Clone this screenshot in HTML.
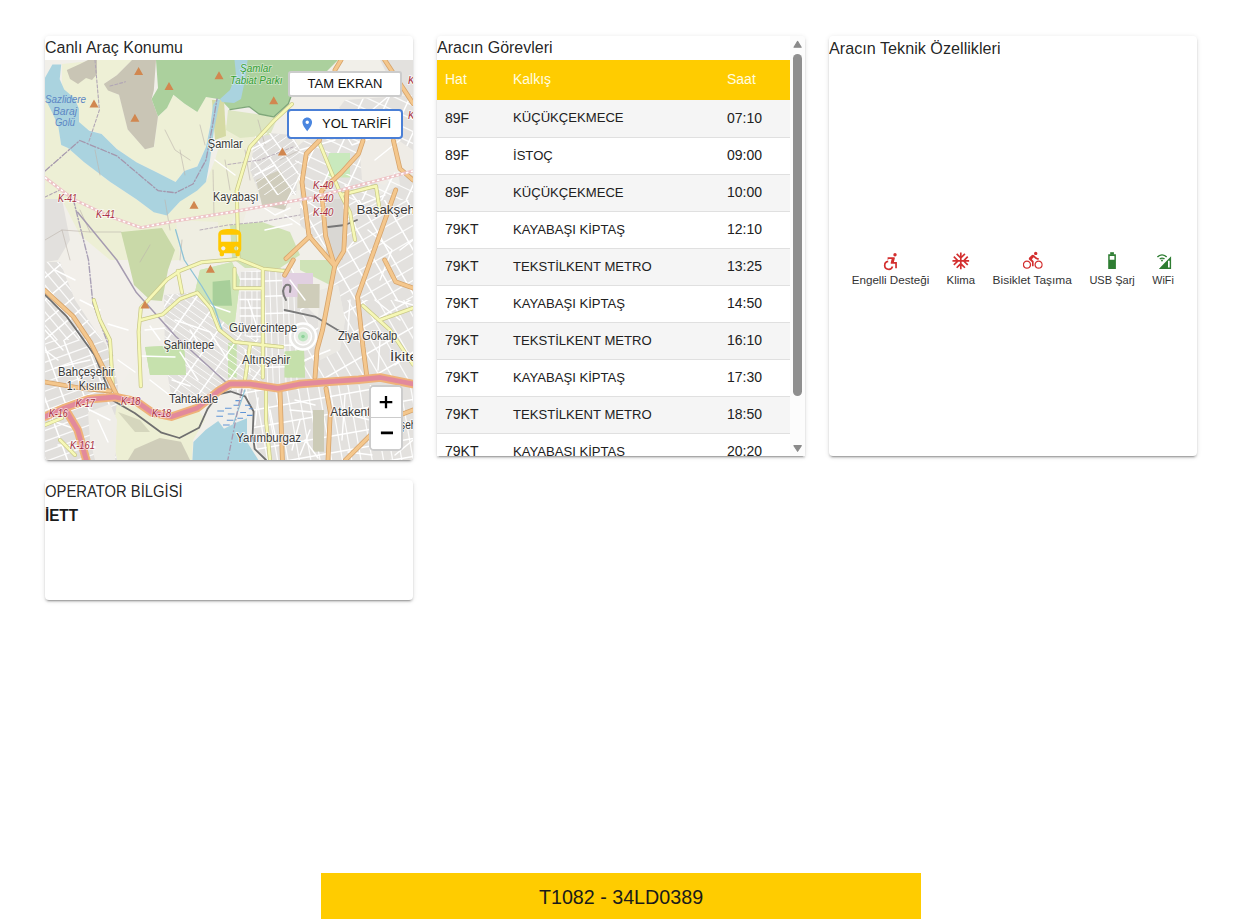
<!DOCTYPE html>
<html><head><meta charset="utf-8">
<style>
html,body{margin:0;padding:0;background:#fff;width:1255px;height:919px;overflow:hidden;font-family:"Liberation Sans",sans-serif;color:rgba(0,0,0,0.87)}
.card{position:absolute;background:#fff;border-radius:4px;box-shadow:0px 3px 1px -2px rgba(0,0,0,0.2),0px 2px 2px 0px rgba(0,0,0,0.14),0px 1px 5px 0px rgba(0,0,0,0.12);overflow:hidden}
.title{position:absolute;left:0;top:0;font-size:16px;line-height:24px;white-space:nowrap;color:rgba(0,0,0,0.87)}
#c1{left:45px;top:36px;width:368px;height:424px}
#c2{left:437px;top:36px;width:368px;height:420px;border-radius:4px 4px 0 0}
#c3{left:829px;top:36px;width:368px;height:420px}
#c4{left:45px;top:480px;width:368px;height:120px}
#map{position:absolute;left:0;top:24px;width:368px;height:400px;background:#f2efe9;overflow:hidden}
.btn{position:absolute;background:#fff;font-size:13px;color:#111;white-space:nowrap;box-sizing:border-box}
#tam{left:243px;top:11px;width:114px;height:26px;border:2px solid rgba(0,0,0,0.2);border-radius:3px;text-align:center;line-height:22px}
#yol{left:242px;top:49px;width:116px;height:30px;border:2px solid #4a7fd6;border-radius:4px;line-height:26px;padding-left:33px}
#zoom{position:absolute;left:324px;top:325px;width:34px;height:66px;border:2px solid rgba(0,0,0,0.2);border-radius:5px;box-sizing:border-box;background:#fff;overflow:hidden}
#zoom div{height:30px;line-height:30px;text-align:center;font:bold 18px "Liberation Sans",sans-serif;color:#000}
table{border-collapse:collapse;position:absolute;left:0;top:24px;width:353px}
th{background:#ffcc00;color:#fffde0;font-weight:normal;font-size:14px;height:40px;text-align:left;padding:0 0 2px 0;box-sizing:border-box}
td{font-size:14px;height:34px;border-bottom:1px solid #e0e0e0;padding:0 0 2px 0;color:#212121;white-space:nowrap}
td.c2{font-size:13.1px}
tr.f td{height:35px}
tr.g td{background:#f5f5f5}
.c1{padding-left:8px !important;width:68px}
.c2{width:214px}
.sb{position:absolute;left:353px;top:0;width:15px;height:420px;background:#fcfcfc}
.feat{position:absolute;top:0;text-align:center;font-size:11.5px;color:#333;white-space:nowrap}
#bar{position:absolute;left:321px;top:873px;width:600px;height:46px;background:#ffcc00;text-align:center;font-size:19.7px;line-height:48px;color:#1a1a1a}
</style></head>
<body>
<div class="card" id="c1">
  <div class="title">Canlı Araç Konumu</div>
  <div id="map">
    <svg id="mapsvg" width="368" height="400" viewBox="45 60 368 400" style="position:absolute;left:0;top:0"><rect x="45" y="60" width="368" height="400" fill="#f1efe9"/>
<!-- farmland (light yellow-green) -->
<path d="M62 64 L100 60 L132 60 L117 75 L104 84 L108 90 L119 95 L128 130 L145 149 L154 147 L158 117 L167 108 L173 95 L184 103.5 L197 112 L206 97 L214 99 L210 125 L206 147 L197 166.6 L184 171 L175.6 182 L158 173 L136 162 L117 149 L101.6 134 L82 127.5 L72 112 L62 95 Z" fill="#eef0d6"/>
<path d="M45 95 L52.4 113 L58.3 126.4 L61.2 145 L68 148 L84 162 L110 182 L136 199 L154 212 L167 215.6 L180 201.5 L206 182 L215 160 L225 125 L250 120 L270 125 L255 175 L240 210 L230 230 L205 240 L180 260 L140 262 L110 260 L80 235 L62 200 L45 199 Z" fill="#edefd5"/>
<path d="M117 401 L150 412 L172 417 L197 408 L205 420 L193 440 L192 460 L117 460 L112 430 Z" fill="#edefd4"/>
<!-- light land (beige) -->
<path d="M58 260 L138 260 L140 330 L138 358 L118 390 L100 350 L85 315 L62 285 Z" fill="#f2efea"/>
<path d="M180 240 L240 232 L250 200 L300 190 L300 140 L260 130 L245 150 L238 200 L230 232 Z" fill="#efede2"/>
<!-- residential gray areas -->
<path d="M45 199 L62 199 L70 240 L58 260 L45 262 Z" fill="#e2e0dd"/>
<path d="M45 262 L60 262 L75 300 L95 330 L110 350 L118 385 L117 402 L112 440 L117 460 L45 460 Z" fill="#e1dfdc"/>
<path d="M164 295 L195 292 L212 310 L232 330 L262 340 L265 300 L262 268 L293 268 L300 300 L320 320 L330 290 L340 260 L300 225 L300 185 L293 150 L330 120 L345 100 L413 95 L413 460 L266 460 L254.6 448.8 L252.7 433.5 L253.6 411.5 L245 396.3 L230.7 391.5 L205 402 L172 400 L165 360 Z" fill="#e3e1de"/>
<path d="M239 272 L262 270 L262 340 L240 335 Z" fill="#e0dedb"/>
<path d="M256 132 L293 135 L300 150 L296 195 L260 195 L250 170 Z" fill="#e0dedb"/>
<path d="M380 60 L413 60 L413 100 L395 90 Z" fill="#e3e1de"/>
<path d="M282 395 L315 390 L328 460 L282 460 Z" fill="#e2e0dd"/>
<!-- lighter urban open spaces -->
<path d="M320 290 L338 285 L345 320 L340 350 L320 360 L318 320 Z" fill="#ecebe6"/>
<path d="M370 150 L395 150 L400 185 L380 195 Z" fill="#ecebe7"/>
<!-- gray top areas -->
<path d="M103.8 84 L116.8 75.2 L132 60 L156 60 L153.8 90.5 L151.6 99 L158 116.6 L153.8 147 L145 149.2 L127.7 129.6 L119 94.8 L108 90.5 Z" fill="#c9c5b5"/>
<path d="M66.8 70 L80 64 L88 60 L97 60 L97 74 L92 80 L86 78 L78 84 L70 79 Z" fill="#c9c5b5"/>
<path d="M256 180 L280 170 L292 190 L285 210 L262 205 Z" fill="#d0cdbd"/>
<!-- forest top -->
<path d="M156 60 L338 60 L326 72 L300 88 L291 96.4 L288.3 103.7 L273.7 116.9 L259 114 L249 106.6 L230 109.6 L221 100 L218 99 L206 97 L197.3 112 L184.3 103.5 L173.4 94.8 L167 108 L158 116.6 L151.6 99 L158 88 Z" fill="#abd09d"/>
<path d="M212 100 L224 100 L226 136 L215 140 Z" fill="#d5daa4"/>
<path d="M228 110 L278 117 L270 135 L240 138 L226 130 Z" fill="#dde6c2"/>

<!-- green areas middle/bottom -->
<path d="M121 232 L162 228 L175 250 L168 270 L162 301 L150 300 L134 285 L128 260 Z" fill="#c9d9a8"/>
<path d="M145 347 L184 345 L186 375 L150 375 Z" fill="#c6e1ad"/>
<path d="M212.6 281.8 L230 280 L232 305.7 L212.6 305.7 Z" fill="#a8cf9a"/>
<path d="M230 225 L262 222 L290 232 L300 255 L280 268 L245 268 L232 258 Z" fill="#d0e2b4"/>
<path d="M176 220 L218 222 L222 262 L200 262 L180 262 Z" fill="#efeee2"/>
<path d="M200 270 L232 262 L240 280 L234 330 L212 312 L195 292 Z" fill="#cfe5b6"/>
<path d="M284.6 351.4 L304 350 L305 377.5 L284.6 377.5 Z" fill="#c5e0ab"/>
<path d="M228 342.7 L236.7 342.7 L236.7 377.5 L228 377.5 Z" fill="#c8e2ae"/>
<path d="M328 155.8 L350 155.8 L350 177.5 L328 177.5 Z" fill="#cbe8b6"/>
<path d="M282.4 273 L313 273 L313 297 L282.4 297 Z" fill="#e1d0e1"/>
<path d="M297.6 284 L319.4 284 L319.4 308 L297.6 308 Z" fill="#cfcdba"/>
<path d="M300 260 L340 260 L330 285 L300 270 Z" fill="#cfe3b7"/>
<path d="M313 410 L324 410 L324 451.5 L313 451.5 Z" fill="#cccbb7"/>
<path d="M134.6 449 L159.7 438 L181 441.7 L190 460 L128 460 Z" fill="#cfcdb9"/>
<path d="M118 412 L140 420 L150 432 L135 432 Z" fill="#d5d6bd"/>
<!-- water -->
<path d="M52.4 64.4 L61.2 64.4 L59.7 79.2 L64.2 89.5 L74.5 98.3 L79 108.7 L79 122 L89.2 130.8 L101.6 134 L116.8 149 L136.4 162.3 L158 173 L175.6 182 L184.3 171 L197.3 166.6 L206 147 L210.4 125 L213 105 L217 99 L220 100 L214 130 L210 160 L206 182 L197.3 190.6 L180 201.5 L167 215.6 L153.8 212.3 L136.4 199.3 L110.3 182 L84.2 162.3 L68 148 L61.2 145 L58.3 126.4 L52.4 113 L45 98.3 L45 77.7 Z" fill="#aad3df"/>
<path d="M234.5 60 L247.6 60 L245 80 L241 99 L234 103 L222 102 L220 99 L230 90 L236 75 Z" fill="#aad3df"/>

<defs>
<clipPath id="urbR"><path d="M293 150 L330 120 L345 100 L413 95 L413 460 L266 460 L254.6 448.8 L252.7 433.5 L253.6 411.5 L245 396.3 L230.7 391.5 L230 388 L265 385 L262 340 L265 300 L262 268 L293 268 L300 300 L320 320 L330 290 L340 260 L300 225 L300 185 Z"/></clipPath>
<clipPath id="urbL"><path d="M45 262 L60 262 L75 300 L95 330 L110 350 L118 385 L117 402 L112 440 L117 460 L45 460 Z"/></clipPath>
<clipPath id="urbM"><path d="M164 295 L195 292 L212 310 L232 330 L262 340 L262 385 L230 390 L205 402 L172 400 L165 360 Z"/></clipPath>
<clipPath id="urbG"><path d="M239 272 L262 270 L262 340 L240 335 Z"/></clipPath>
<clipPath id="urbT"><path d="M256 132 L293 135 L300 150 L296 195 L260 195 L250 170 Z"/></clipPath>
<clipPath id="cell0"><rect x="290" y="95" width="123" height="105"/></clipPath>
<clipPath id="cell1"><rect x="290" y="200" width="123" height="100"/></clipPath>
<clipPath id="cell2"><rect x="232" y="260" width="68" height="130"/></clipPath>
<clipPath id="cell3"><rect x="300" y="300" width="113" height="80"/></clipPath>
<clipPath id="cell4"><rect x="230" y="385" width="183" height="75"/></clipPath>
<clipPath id="cell5"><rect x="45" y="262" width="73" height="78"/></clipPath>
<clipPath id="cell6"><rect x="45" y="340" width="73" height="120"/></clipPath>
<clipPath id="cell7"><rect x="164" y="292" width="98" height="110"/></clipPath>
<clipPath id="cell8"><rect x="250" y="132" width="50" height="63"/></clipPath>
<clipPath id="cell9"><rect x="239" y="268" width="23" height="72"/></clipPath>
</defs>
<g clip-path="url(#urbR)"><g clip-path="url(#cell0)" fill="none">
<path d="M310.0 33.4 L465.6 106.0 M305.4 43.2 L461.0 115.8 M300.7 53.4 L456.3 125.9 M295.4 64.6 L451.0 137.2 M290.8 74.5 L446.4 147.0 M286.2 84.5 L441.8 157.0 M281.4 94.7 L437.0 167.3 M277.2 103.7 L432.8 176.3 M272.5 113.7 L428.1 186.3 M267.7 124.1 L423.3 196.7 M262.6 134.9 L418.3 207.5 M258.5 143.7 L414.2 216.3 M254.2 153.1 L409.8 225.6 M250.1 161.8 L405.7 234.4 M245.0 172.7 L400.6 245.3 M240.1 183.3 L395.7 255.8" stroke="#ffffff" stroke-width="1.3" opacity="0.85"/>
<path d="M310.0 33.4 L237.4 189.0 M333.8 44.5 L261.2 200.1 M357.4 55.5 L284.8 211.1 M378.6 65.4 L306.0 221.0 M399.4 75.1 L326.9 230.7 M416.6 83.1 L344.1 238.8 M432.7 90.6 L360.1 246.3 M452.9 100.0 L380.3 255.7" stroke="#ffffff" stroke-width="1.5"/>
</g></g>
<g clip-path="url(#urbR)"><g clip-path="url(#cell1)" fill="none">
<path d="M236.4 219.2 L382.3 134.9 M241.8 228.6 L387.8 144.3 M247.4 238.2 L393.3 153.9 M252.5 247.1 L398.5 162.8 M258.5 257.4 L404.4 173.1 M264.4 267.6 L410.3 183.3 M271.0 279.0 L416.9 194.8 M277.0 289.5 L423.0 205.2 M283.3 300.3 L429.2 216.1 M289.3 310.7 L435.2 226.5 M295.6 321.6 L441.5 237.4 M301.5 331.9 L447.4 247.6 M307.1 341.6 L453.0 257.3 M314.0 353.5 L459.9 269.3" stroke="#ffffff" stroke-width="1.3" opacity="0.85"/>
<path d="M236.4 219.2 L320.7 365.1 M256.1 207.8 L340.3 353.7 M274.8 197.0 L359.1 342.9 M290.9 187.7 L375.1 333.6 M306.3 178.8 L390.6 324.7 M322.2 169.6 L406.4 315.6 M336.5 161.3 L420.8 307.3 M355.7 150.3 L440.0 296.2 M372.3 140.7 L456.6 286.6" stroke="#ffffff" stroke-width="1.5"/>
</g></g>
<g clip-path="url(#urbR)"><g clip-path="url(#cell2)" fill="none">
<path d="M341.6 244.0 L347.0 400.6 M335.8 244.2 L341.2 400.8 M329.0 244.4 L334.4 401.0 M322.3 244.6 L327.8 401.2 M317.2 244.8 L322.7 401.4 M311.8 245.0 L317.2 401.6 M305.0 245.2 L310.5 401.8 M299.1 245.4 L304.6 402.1 M292.2 245.7 L297.7 402.3 M286.4 245.9 L291.9 402.5 M281.2 246.1 L286.7 402.7 M275.0 246.3 L280.4 402.9 M268.5 246.5 L273.9 403.1 M262.9 246.7 L268.4 403.3 M257.6 246.9 L263.1 403.5 M251.9 247.1 L257.4 403.7 M245.1 247.3 L250.6 403.9 M238.6 247.6 L244.1 404.2 M233.3 247.7 L238.8 404.4 M227.8 247.9 L233.3 404.5 M222.5 248.1 L228.0 404.7 M217.3 248.3 L222.8 404.9 M210.8 248.5 L216.2 405.1 M205.4 248.7 L210.8 405.3 M199.3 248.9 L204.7 405.5 M193.4 249.1 L198.8 405.7 M187.9 249.3 L193.4 405.9" stroke="#ffffff" stroke-width="1.0" opacity="0.85"/>
<path d="M341.6 244.0 L185.0 249.4 M342.1 259.3 L185.5 264.8 M342.8 278.3 L186.2 283.8 M343.3 293.5 L186.7 299.0 M343.9 311.0 L187.3 316.4 M344.5 326.9 L187.9 332.4 M345.0 343.2 L188.4 348.7 M345.8 364.6 L189.2 370.1 M346.5 384.8 L189.9 390.2" stroke="#ffffff" stroke-width="1.5"/>
</g></g>
<g clip-path="url(#urbR)"><g clip-path="url(#cell3)" fill="none">
<path d="M383.7 238.6 L457.9 367.2 M372.1 245.3 L446.3 373.9 M362.6 250.8 L436.8 379.3 M352.5 256.6 L426.7 385.2 M341.0 263.2 L415.3 391.8 M330.2 269.5 L404.4 398.0 M321.0 274.8 L395.3 403.3 M309.1 281.6 L383.4 410.2 M299.6 287.1 L373.9 415.7 M290.0 292.7 L364.2 421.3 M278.7 299.2 L353.0 427.7 M268.9 304.9 L343.1 433.4 M259.1 310.5 L333.4 439.1" stroke="#ffffff" stroke-width="1.3" opacity="0.85"/>
<path d="M383.7 238.6 L255.1 312.8 M393.7 256.0 L265.1 330.2 M406.1 277.5 L277.5 351.7 M416.9 296.1 L288.3 370.3 M429.4 317.7 L300.8 392.0 M440.7 337.4 L312.2 411.7 M452.5 357.8 L323.9 432.1" stroke="#ffffff" stroke-width="1.5"/>
</g></g>
<g clip-path="url(#urbR)"><g clip-path="url(#cell4)" fill="none">
<path d="M405.8 302.2 L441.8 506.8 M396.0 303.9 L432.0 508.5 M385.9 305.7 L422.0 510.3 M375.0 307.6 L411.0 512.2 M366.1 309.2 L402.1 513.8 M357.2 310.7 L393.3 515.3 M346.2 312.7 L382.3 517.3 M335.4 314.6 L371.5 519.2 M326.3 316.2 L362.4 520.8 M317.4 317.7 L353.4 522.4 M306.8 319.6 L342.9 524.2 M295.6 321.6 L331.7 526.2 M286.7 323.1 L322.8 527.8 M275.5 325.1 L311.6 529.7 M264.5 327.1 L300.6 531.7 M254.4 328.8 L290.5 533.5 M244.8 330.5 L280.8 535.2 M236.1 332.1 L272.2 536.7 M227.6 333.6 L263.7 538.2 M216.4 335.5 L252.5 540.2 M207.3 337.1 L243.4 541.8" stroke="#ffffff" stroke-width="1.3" opacity="0.85"/>
<path d="M405.8 302.2 L201.2 338.2 M408.9 319.9 L204.3 356.0 M412.8 342.2 L208.2 378.3 M416.4 362.6 L211.8 398.7 M419.6 380.7 L215.0 416.8 M422.6 397.8 L218.0 433.9 M426.4 419.3 L221.8 455.4 M429.3 435.6 L224.7 471.7 M432.4 453.1 L227.8 489.2 M435.9 473.3 L231.3 509.4 M439.9 495.8 L235.3 531.8" stroke="#ffffff" stroke-width="1.5"/>
</g></g>
<g clip-path="url(#urbL)"><g clip-path="url(#cell5)" fill="none">
<path d="M88.7 218.7 L163.8 308.2 M82.3 224.1 L157.4 313.6 M74.5 230.6 L149.6 320.1 M68.2 235.9 L143.3 325.4 M62.3 240.8 L137.4 330.3 M55.9 246.2 L131.0 335.7 M49.1 251.9 L124.2 341.4 M43.1 256.9 L118.2 346.4 M36.9 262.2 L112.0 351.7 M30.3 267.7 L105.4 357.2 M23.3 273.6 L98.3 363.1 M17.1 278.8 L92.2 368.3 M10.5 284.3 L85.6 373.8 M2.8 290.8 L77.9 380.3" stroke="#ffffff" stroke-width="1.3" opacity="0.85"/>
<path d="M88.7 218.7 L-0.8 293.8 M99.6 231.7 L10.1 306.8 M110.7 244.9 L21.2 320.0 M121.3 257.6 L31.8 332.7 M130.1 268.1 L40.6 343.2 M138.5 278.1 L49.0 353.2 M146.8 288.0 L57.3 363.1 M158.8 302.2 L69.3 377.3" stroke="#ffffff" stroke-width="1.5"/>
</g></g>
<g clip-path="url(#urbL)"><g clip-path="url(#cell6)" fill="none">
<path d="M-14.9 355.0 L126.5 303.6 M-11.4 364.7 L130.0 313.2 M-8.8 371.9 L132.6 320.5 M-5.6 380.7 L135.8 329.3 M-2.5 389.1 L138.9 337.7 M0.8 398.2 L142.2 346.7 M3.7 406.2 L145.1 354.7 M7.2 415.9 L148.6 364.4 M9.9 423.3 L151.3 371.8 M13.0 431.8 L154.4 380.4 M16.3 440.9 L157.7 389.4 M19.8 450.4 L161.2 398.9 M23.1 459.4 L164.5 408.0 M26.3 468.4 L167.7 416.9 M29.7 477.6 L171.1 426.1 M33.2 487.1 L174.5 435.7 M36.1 495.2 L177.5 443.7" stroke="#ffffff" stroke-width="1.3" opacity="0.85"/>
<path d="M-14.9 355.0 L36.5 496.4 M4.7 347.9 L56.2 489.3 M24.1 340.8 L75.6 482.2 M40.5 334.9 L91.9 476.3 M59.4 328.0 L110.8 469.4 M78.7 320.9 L130.2 462.3 M96.1 314.6 L147.6 456.0 M113.9 308.1 L165.4 449.5" stroke="#ffffff" stroke-width="1.5"/>
</g></g>
<g clip-path="url(#urbM)"><g clip-path="url(#cell7)" fill="none">
<path d="M193.7 237.4 L322.6 327.7 M190.2 242.5 L319.0 332.7 M186.6 247.6 L315.5 337.8 M183.6 251.9 L312.5 342.1 M180.0 257.0 L308.9 347.2 M176.1 262.6 L304.9 352.9 M172.2 268.1 L301.1 358.3 M168.5 273.3 L297.4 363.6 M165.2 278.1 L294.1 368.3 M161.5 283.4 L290.4 373.6 M158.0 288.4 L286.9 378.6 M154.6 293.2 L283.5 383.5 M150.8 298.6 L279.7 388.9 M147.8 302.9 L276.7 393.2 M144.1 308.2 L273.0 398.5 M141.2 312.4 L270.0 402.7 M137.6 317.5 L266.5 407.7 M134.2 322.4 L263.1 412.6 M131.0 326.9 L259.9 417.1 M127.4 332.1 L256.3 422.3 M124.0 337.0 L252.8 427.3 M120.4 342.1 L249.3 432.3 M116.5 347.6 L245.4 437.9 M113.3 352.2 L242.2 442.4 M110.4 356.4 L239.3 446.6 M107.2 361.0 L236.0 451.2 M103.5 366.2 L232.4 456.4" stroke="#ffffff" stroke-width="1.0" opacity="0.85"/>
<path d="M193.7 237.4 L103.4 366.3 M206.5 246.4 L116.2 375.3 M223.6 258.4 L133.4 387.3 M239.3 269.4 L149.1 398.3 M253.7 279.5 L163.5 408.3 M270.8 291.4 L180.5 420.3 M284.5 301.0 L194.2 429.9 M300.2 312.0 L210.0 440.9 M313.2 321.1 L222.9 450.0" stroke="#ffffff" stroke-width="1.5"/>
</g></g>
<g clip-path="url(#urbT)"><g clip-path="url(#cell8)" fill="none">
<path d="M212.0 152.4 L286.1 100.5 M216.4 158.7 L290.5 106.8 M220.9 165.1 L295.0 113.2 M225.4 171.5 L299.5 119.6 M229.3 177.0 L303.4 125.2 M233.4 182.9 L307.5 131.0 M237.2 188.3 L311.3 136.5 M240.8 193.4 L314.8 141.6 M244.8 199.2 L318.8 147.3 M249.2 205.5 L323.3 153.6 M253.6 211.8 L327.7 159.9 M257.9 217.9 L332.0 166.0 M262.5 224.4 L336.5 172.5" stroke="#ffffff" stroke-width="1.0" opacity="0.85"/>
<path d="M212.0 152.4 L263.9 226.5 M223.4 144.4 L275.3 218.5 M236.2 135.4 L288.1 209.5 M248.2 127.1 L300.0 201.2 M259.8 119.0 L311.7 193.0 M272.4 110.1 L324.3 184.2" stroke="#ffffff" stroke-width="1.5"/>
</g></g>
<g clip-path="url(#urbG)"><g clip-path="url(#cell9)" fill="none">
<path d="M293.3 261.2 L293.3 346.8 M287.3 261.2 L287.3 346.8 M281.6 261.2 L281.6 346.8 M275.0 261.2 L275.0 346.8 M268.2 261.2 L268.2 346.8 M262.2 261.2 L262.2 346.8 M257.0 261.2 L257.0 346.8 M251.9 261.2 L251.9 346.8 M245.2 261.2 L245.2 346.8 M240.0 261.2 L240.0 346.8 M233.6 261.2 L233.6 346.8 M227.5 261.2 L227.5 346.8 M221.8 261.2 L221.8 346.8 M215.3 261.2 L215.3 346.8 M210.2 261.2 L210.2 346.8" stroke="#ffffff" stroke-width="1.0" opacity="0.85"/>
<path d="M293.3 261.2 L207.7 261.2 M293.3 271.0 L207.7 271.0 M293.3 279.1 L207.7 279.1 M293.3 290.4 L207.7 290.4 M293.3 299.4 L207.7 299.4 M293.3 308.0 L207.7 308.0 M293.3 316.1 L207.7 316.1 M293.3 326.7 L207.7 326.7 M293.3 336.4 L207.7 336.4" stroke="#ffffff" stroke-width="1.5"/>
</g></g>
<path d="M359 140 L395 138 L413 150 L413 175 L395 172 L385 185 L362 180 Z" fill="#efece6"/>
<path d="M326 199 L343 199 L343 260 L326 260 Z" fill="#d9d7d3"/>
<path d="M320 290 L338 285 L345 320 L340 350 L320 360 L318 320 Z" fill="#ebe9e4"/>
<path d="M329 153 L350 153 L350 174 L329 174 Z" fill="#c9e9bd"/>
<path d="M145 347 L184 345 L186 375 L150 375 Z" fill="#c6e1ad"/>
<path d="M284.6 351.4 L304 350 L305 377.5 L284.6 377.5 Z" fill="#c5e0ab"/>
<path d="M282.4 273 L313 273 L313 297 L282.4 297 Z" fill="#e1d0e1"/>
<path d="M297.6 284 L319.4 284 L319.4 308 L297.6 308 Z" fill="#cfcdba"/>
<path d="M313 410 L324 410 L324 451.5 L313 451.5 Z" fill="#cccbb7"/>
<path d="M200 270 L232 262 L240 280 L234 330 L212 312 L195 292 Z" fill="#cfe5b6"/>
<path d="M212.6 281.8 L230 280 L232 305.7 L212.6 305.7 Z" fill="#a8cf9a"/>
<path d="M88 412 L110 404 L117 420 L115 460 L95 460 L90 440 Z" fill="#efede8"/>
<path d="M218.2 394.3 L230.7 391.5 L245 396.3 L253.6 411.5 L252.7 433.5 L240 440 L215 432 L207.7 418 L207.7 408.7 Z" fill="#f0efeb"/>
<path d="M192.4 460 L193.4 442 L205.8 429.7 L218.2 421 L224 428.8 L235.4 423 L247 418.2 L247 442 L258.4 460 Z" fill="#aad3df"/>
<g fill="none" stroke-linecap="round" stroke-linejoin="round">
<!-- thin gray field boundaries -->
<g stroke="#bdb5ad" stroke-width="0.7" opacity="0.9">
<path d="M45 240 L62 230 L90 232 L121 232 M90 232 L80 210 M62 230 L70 260 M140 262 L150 245 M180 150 L185 175 M165 130 L175 150 L190 160 M245 150 L250 180 M200 125 L205 145 M95 150 L100 175 M165 200 L170 230 M182 240 L180 260 M213 170 L214 215 M225 160 L230 190 M258 120 L265 145 M280 160 L300 150"/>
</g>
<!-- white streets (urban texture) -->
<g stroke="#ffffff" stroke-width="1.4">
<path d="M300 150 L335 140 M340 125 L352 145 L380 135 L395 120 M300 175 L285 205 M345 185 L360 205 L385 195 M368 230 L392 250 L380 280 M355 240 L340 258 M285 215 L300 225 M290 280 L305 300 M375 300 L400 320 M350 300 L348 330 M330 350 L305 360 M380 340 L378 370 M395 365 L413 352 M395 300 L413 305 M400 250 L413 240 M375 160 L400 140 M350 120 L372 110 L390 95 M260 205 L275 215 L290 208 M265 230 L292 224 M305 200 L320 210 M345 200 L355 225"/>
<path d="M295 400 L315 405 M345 395 L342 440 M300 420 L292 450 M370 430 L395 440 M305 440 L318 458 M258 398 L255 425 M270 410 L276 440 M348 452 L372 455 M290 410 L312 412 M350 415 L370 420 M380 400 L400 398 M395 455 L413 440 M300 455 L310 430"/>
<path d="M48 300 L66 312 L80 338 M45 330 L63 350 M55 368 L90 360 M50 420 L78 430 M58 445 L95 447 M98 420 L108 442 M75 280 L55 270 M45 350 L58 360 M80 300 L100 310 M90 410 L110 420"/>
<path d="M175 320 L210 332 L228 360 M180 352 L198 380 M210 305 L230 312 M240 382 L215 390 M190 386 L172 380 M248 300 L258 330 M245 350 L250 372 M190 330 L200 345"/>
<path d="M140 356 L175 357 M150 380 L168 394 M108 324 L128 330 M118 360 L135 372 M150 326 L160 340 M145 330 L165 328"/>
<path d="M250 150 L270 140 M255 175 L275 165 M215 160 L235 175"/>
</g>
<!-- admin/dashed gray lines -->
<path d="M45 171 L79.8 140.5 L116.8 155.8 L158 190.6 L175.6 192.8 L193 184 L206 160 L212.6 125 L217 99" stroke="#a497ad" stroke-width="1.3" stroke-dasharray="6 2 1.5 2"/>
<path d="M95 60 L99.4 110 L88.5 142.7 M110 86 L125.5 81.8 M45 197 L60 190" stroke="#b1a6b5" stroke-width="1.1" stroke-dasharray="3 2"/>
<path d="M228 164.5 L260 160 L293 147 M200 230 L228 225 L260 222 L300 215" stroke="#b9aeb9" stroke-width="1" stroke-dasharray="3 2"/>
<path d="M73.3 199.3 L88.5 260 L92.9 303.5 L112.5 355.8" stroke="#a9a0b6" stroke-width="1.4" stroke-dasharray="6 2 1.5 2"/>
<path d="M77.6 212.3 L116.8 260 L136.4 292.6 L175.6 336.2 L230 386" stroke="#a59bb0" stroke-width="1.5"/>
<!-- railways dark -->
<path d="M45 294.8 L66.8 316.6 L95 355.8 L113 400.5 L134.6 413 L161.5 432.7 L179.4 438 L199 427.8 L207.7 408.7 L218.2 394.3 L230.7 391.5 L245 396.3 L253.6 411.5 L252.7 433.5 L254.6 448.8 L266 460" stroke="#6f6f6f" stroke-width="1.8"/>
<path d="M284.6 310 L315 316.6 L336.8 329.6 L355 338" stroke="#7a7a7a" stroke-width="1.8"/>
<path d="M286 300 Q280 290 286 285 Q292 283 290 292" stroke="#7a7a7a" stroke-width="2"/>
<path d="M328 227 L345 225 L357 220" stroke="#777" stroke-width="1.8"/>
<!-- rivers -->
<path d="M175.6 229.7 L184.3 260 L201.7 286 L214.7 308 L222 330" stroke="#8dc2d6" stroke-width="1.3"/>
<!-- secondary yellow -->
<g stroke="#c8c788" stroke-width="4">
<path d="M238.5 259 L236.7 190.6 L249.8 147 L273.7 121 L292 104 M140.8 386.2 L138.6 331.8 L140.8 308 L166.9 279.6 L180 270.9 L201.7 262.2 L238.5 259 L262.8 268.7 L285 271 M140.8 320 L162.5 314.4 L180 299 L197.3 292.6 L210.4 308 L219 329.6 L234.5 342 L262.8 345 L282.4 347 M177.8 270.9 L182 292.6 M262.8 268.7 L262.8 377.5 M234.5 268.7 L234.5 288.3 L262.8 288.3 M363 305.7 L390 330 L413 364.5 M380 320 L413 308 M319.4 142.7 L330 168.8 L341 195 L350 212.3 L355 240 M341 195 L376 186 L380 212.3 M45 425 L62 418 M60 440 L75 455 M245 380 L250 345 M266 390 L266 420 L270 460 M93.8 300 L100 320 L110 340 L113 390"/>
</g>
<g stroke="#f6f8b6" stroke-width="2.6">
<path d="M238.5 259 L236.7 190.6 L249.8 147 L273.7 121 L292 104 M140.8 386.2 L138.6 331.8 L140.8 308 L166.9 279.6 L180 270.9 L201.7 262.2 L238.5 259 L262.8 268.7 L285 271 M140.8 320 L162.5 314.4 L180 299 L197.3 292.6 L210.4 308 L219 329.6 L234.5 342 L262.8 345 L282.4 347 M177.8 270.9 L182 292.6 M262.8 268.7 L262.8 377.5 M234.5 268.7 L234.5 288.3 L262.8 288.3 M363 305.7 L390 330 L413 364.5 M380 320 L413 308 M319.4 142.7 L330 168.8 L341 195 L350 212.3 L355 240 M341 195 L376 186 L380 212.3 M45 425 L62 418 M60 440 L75 455 M245 380 L250 345 M266 390 L266 420 L270 460 M93.8 300 L100 320 L110 340 L113 390"/>
</g>
<!-- primary orange -->
<g stroke="#d6a46c" stroke-width="4.8">
<path d="M341 60 L335 70 M322 125 L319.4 140.5 L306.3 153.6 L302 182 L309 236 L334.7 266 L322.5 330 L317 350 L315 377.5 M363 140.5 L358.6 153.6 L341 173 L321.6 190.6 L325.6 236 L334.7 266 M347 190 L343.8 251 L334.7 266 M286 258.6 L310 236 M393.4 140.5 L400 168.8 L413 180 M384.7 60 L413 103.5 M395.7 190 L357.6 296.7 L363 347 L367.3 379.7 M384.7 260 L395.6 281.8 L413 288 M326 388.4 L330.3 412.3 L328 460 M280 390.6 L282.4 460 M345.5 460 L371.6 434 L400 415 L413 410 M45 290.5 L73.3 316.6 L90.7 342.7 L110.3 381.9 L116.8 395 M45 382 L80 388 L110 391 M284.6 275.2 L293.3 260"/>
</g>
<g stroke="#f4c78d" stroke-width="3.2">
<path d="M341 60 L335 70 M322 125 L319.4 140.5 L306.3 153.6 L302 182 L309 236 L334.7 266 L322.5 330 L317 350 L315 377.5 M363 140.5 L358.6 153.6 L341 173 L321.6 190.6 L325.6 236 L334.7 266 M347 190 L343.8 251 L334.7 266 M286 258.6 L310 236 M393.4 140.5 L400 168.8 L413 180 M384.7 60 L413 103.5 M395.7 190 L357.6 296.7 L363 347 L367.3 379.7 M384.7 260 L395.6 281.8 L413 288 M326 388.4 L330.3 412.3 L328 460 M280 390.6 L282.4 460 M345.5 460 L371.6 434 L400 415 L413 410 M45 290.5 L73.3 316.6 L90.7 342.7 L110.3 381.9 L116.8 395 M45 382 L80 388 L110 391 M284.6 275.2 L293.3 260"/>
</g>
<!-- motorway -->
<path d="M45 416.7 L64.6 408 L88.5 399.3 L114.6 397 L136.4 401.5 L151.6 412.3 L171.2 416.7 L197.3 408 L219 390.6 L230 384 L249.8 384 L278 388.4 L299.8 384 L326 381.9 L358.6 379.7 L380.3 377.5 L413 384 M64.6 408 L77.6 429.7 L86.3 460" stroke="#efb27a" stroke-width="8.5"/>
<path d="M45 416.7 L64.6 408 L88.5 399.3 L114.6 397 L136.4 401.5 L151.6 412.3 L171.2 416.7 L197.3 408 L219 390.6 L230 384 L249.8 384 L278 388.4 L299.8 384 L326 381.9 L358.6 379.7 L380.3 377.5 L413 384 M64.6 408 L77.6 429.7 L86.3 460" stroke="#e28a9c" stroke-width="4.8"/>
<!-- K-41 construction -->
<path d="M45 177.5 L73 199 L110 216.7 L141 227.6 L175.6 221 L230 212.3 L315 197 L413 171" stroke="#edc3c6" stroke-width="3"/>
<path d="M45 177.5 L73 199 L110 216.7 L141 227.6 L175.6 221 L230 212.3 L315 197 L413 171" stroke="#ffffff" stroke-width="1.6" stroke-dasharray="2.5 2.5" stroke-linecap="butt"/>
<!-- forest boundary line -->
<path d="M230 109.6 L249 106.6 L259 114 L273.7 116.9 L288.3 103.7 L291 96.4" stroke="#7fa77a" stroke-width="1.3"/>
</g>
<g stroke="#5f95d6" stroke-width="1.1">
<path d="M217.3 411 H224 M225 408.2 H231.6 M235.4 400.6 H241.2 M233.5 405.3 H239.3 M245 405.3 H250.7 M216.3 416.3 H223 M227.8 414 H234.5 M240.2 412.5 H246 M247 415.4 H252.7 M226.8 420.2 H233.5 M237.4 418.2 H243.1 M223 425 H229.7 M248.8 408.7 H252.7"/>
</g>
<path d="M245 389.6 L233.5 424" stroke="#8ec3d8" stroke-width="1.2" fill="none"/>
<path d="M242 388.6 L227.8 460" stroke="#a898b0" stroke-width="1.3" stroke-dasharray="6 2 1.5 2" fill="none"/>
<g fill="#d1874f">
<path d="M138.6 66.9 L143.1 74.9 L134.1 74.9 Z M94 99.5 L98.5 107.5 L89.5 107.5 Z M134.9 113.7 L139.4 121.7 L130.4 121.7 Z M169 82 L173.5 90 L164.5 90 Z M219 71.2 L223.5 79.2 L214.5 79.2 Z M194 200.7 L198.5 208.7 L189.5 208.7 Z M210.4 264.7 L214.9 272.7 L205.9 272.7 Z M145 300.6 L149.5 308.6 L140.5 308.6 Z M273.7 96.3 L278.2 104.3 L269.2 104.3 Z M282.4 147.4 L286.9 155.4 L277.9 155.4 Z"/>
</g>
<circle cx="303" cy="336.5" r="13" fill="#e6e5e2" stroke="#fff" stroke-width="2.5"/>
<circle cx="303" cy="336.5" r="8.5" fill="#f0efec" stroke="#fff" stroke-width="1.5"/>
<circle cx="303" cy="336.5" r="5" fill="#c2e6c4"/>
<circle cx="303" cy="336.5" r="1.8" fill="#8fd19a"/>
<g font-family="Liberation Sans, sans-serif" font-size="12" fill="#3a3a3a" stroke="#ffffff" stroke-width="2.2" stroke-opacity="0.7" paint-order="stroke" stroke-linejoin="round">
<text x="207.8" y="147.5" textLength="35" lengthAdjust="spacingAndGlyphs">Şamlar</text>
<text x="213" y="200.5" textLength="45.5" lengthAdjust="spacingAndGlyphs">Kayabaşı</text>
<text x="356.4" y="213.5" font-size="13.5" textLength="66" lengthAdjust="spacingAndGlyphs">Başakşehir</text>
<text x="229" y="332.3" textLength="68.2" lengthAdjust="spacingAndGlyphs">Güvercintepe</text>
<text x="163.6" y="348.5" textLength="50.7" lengthAdjust="spacingAndGlyphs">Şahintepe</text>
<text x="242" y="364" textLength="48" lengthAdjust="spacingAndGlyphs">Altınşehir</text>
<text x="338" y="339.5" textLength="59.3" lengthAdjust="spacingAndGlyphs">Ziya Gökalp</text>
<text x="390" y="361" textLength="38" lengthAdjust="spacingAndGlyphs">İkitelli</text>
<text x="58" y="376" textLength="56.6" lengthAdjust="spacingAndGlyphs">Bahçeşehir</text>
<text x="66.8" y="390" textLength="39.2" lengthAdjust="spacingAndGlyphs">1. Kısım</text>
<text x="169" y="402.8" textLength="49" lengthAdjust="spacingAndGlyphs">Tahtakale</text>
<text x="330.3" y="416" textLength="40.2" lengthAdjust="spacingAndGlyphs">Atakent</text>
<text x="372" y="429" textLength="50" lengthAdjust="spacingAndGlyphs">Başakşehir</text>
<text x="236.3" y="442" textLength="64.7" lengthAdjust="spacingAndGlyphs">Yarımburgaz</text>
</g>
<g font-family="Liberation Sans, sans-serif" font-size="10.5" font-style="italic" fill="#35a035" stroke="#ffffff" stroke-width="1.5" stroke-opacity="0.45" paint-order="stroke">
<text x="240" y="72" textLength="31.5" lengthAdjust="spacingAndGlyphs">Şamlar</text>
<text x="230" y="83.5" textLength="52.4" lengthAdjust="spacingAndGlyphs">Tabiat Parkı</text>
</g>
<g font-family="Liberation Sans, sans-serif" font-size="10.5" font-style="italic" fill="#5b86c4">
<text x="45" y="103" textLength="41" lengthAdjust="spacingAndGlyphs">Sazlidere</text>
<text x="53" y="114.5" textLength="24" lengthAdjust="spacingAndGlyphs">Baraj</text>
<text x="55" y="126" textLength="20" lengthAdjust="spacingAndGlyphs">Golü</text>
</g>
<g font-family="Liberation Sans, sans-serif" font-size="10" font-style="italic" fill="#a72c40" stroke="#ffffff" stroke-width="1.8" stroke-opacity="0.6" paint-order="stroke">
<text x="58" y="201.5" textLength="19" lengthAdjust="spacingAndGlyphs">K-41</text>
<text x="96" y="217.5" textLength="19" lengthAdjust="spacingAndGlyphs">K-41</text>
<text x="313" y="188.5" textLength="20.5" lengthAdjust="spacingAndGlyphs">K-40</text>
<text x="313" y="201.5" textLength="20.5" lengthAdjust="spacingAndGlyphs">K-40</text>
<text x="313" y="215.8" textLength="20.5" lengthAdjust="spacingAndGlyphs">K-40</text>
<text x="75.5" y="406.5" textLength="19.5" lengthAdjust="spacingAndGlyphs">K-17</text>
<text x="121" y="405" textLength="19.5" lengthAdjust="spacingAndGlyphs">K-18</text>
<text x="151.7" y="417" textLength="19.5" lengthAdjust="spacingAndGlyphs">K-18</text>
<text x="48.8" y="417" textLength="19" lengthAdjust="spacingAndGlyphs">K-16</text>
<text x="70" y="448.5" textLength="25" lengthAdjust="spacingAndGlyphs">K-161</text>
<text x="408" y="84">K-4</text>
<text x="408" y="118.5">K-4</text>
</g>
<svg x="212.5" y="226" width="34.5" height="34.5" viewBox="0 0 24 24"><path fill="#ffc800" d="M4 16c0 .88.39 1.67 1 2.22V20c0 .55.45 1 1 1h1c.55 0 1-.45 1-1v-1h8v1c0 .55.45 1 1 1h1c.55 0 1-.45 1-1v-1.78c.61-.55 1-1.34 1-2.22V6c0-3.5-3.58-4-8-4s-8 .5-8 4v10zm3.5 1c-.83 0-1.5-.67-1.5-1.5S6.67 14 7.5 14s1.5.67 1.5 1.5S8.33 17 7.5 17zm9 0c-.83 0-1.5-.67-1.5-1.5s.67-1.5 1.5-1.5 1.5.67 1.5 1.5-.67 1.5-1.5 1.5zm1.5-6H6V6h12v5z"/></svg>
</svg>
    <div class="btn" id="tam">TAM EKRAN</div>
    <div class="btn" id="yol"><svg width="16.5" height="16.5" viewBox="0 0 24 24" style="position:absolute;left:9.5px;top:4.6px"><path fill="#4a86e0" d="M12 2C8.13 2 5 5.13 5 9c0 5.25 7 13 7 13s7-7.75 7-13c0-3.87-3.13-7-7-7zm0 9.5a2.5 2.5 0 010-5 2.5 2.5 0 010 5z"/></svg>YOL TARİFİ</div>
    <div id="zoom"><svg width="30" height="62" viewBox="371 387 30 62" style="position:absolute;left:0;top:0"><rect x="370" y="386" width="33" height="64" rx="4" fill="#fff"/><path d="M371 417.5 H402" stroke="#ccc" stroke-width="1"/><path d="M379.7 402.1 H392.3 M386 396 V408.2" stroke="#000" stroke-width="2.3"/><path d="M380.9 432.9 H393" stroke="#000" stroke-width="2.6"/></svg></div>
  </div>
</div>
<div class="card" id="c2">
  <div class="title">Aracın Görevleri</div>
  <table>
    <tr><th class="c1">Hat</th><th class="c2">Kalkış</th><th>Saat</th></tr>
    <tr class="g f"><td class="c1">89F</td><td class="c2">KÜÇÜKÇEKMECE</td><td>07:10</td></tr>
    <tr><td class="c1">89F</td><td class="c2">İSTOÇ</td><td>09:00</td></tr>
    <tr class="g"><td class="c1">89F</td><td class="c2">KÜÇÜKÇEKMECE</td><td>10:00</td></tr>
    <tr><td class="c1">79KT</td><td class="c2">KAYABAŞI KİPTAŞ</td><td>12:10</td></tr>
    <tr class="g"><td class="c1">79KT</td><td class="c2">TEKSTİLKENT METRO</td><td>13:25</td></tr>
    <tr><td class="c1">79KT</td><td class="c2">KAYABAŞI KİPTAŞ</td><td>14:50</td></tr>
    <tr class="g"><td class="c1">79KT</td><td class="c2">TEKSTİLKENT METRO</td><td>16:10</td></tr>
    <tr><td class="c1">79KT</td><td class="c2">KAYABAŞI KİPTAŞ</td><td>17:30</td></tr>
    <tr class="g"><td class="c1">79KT</td><td class="c2">TEKSTİLKENT METRO</td><td>18:50</td></tr>
    <tr><td class="c1">79KT</td><td class="c2">KAYABAŞI KİPTAŞ</td><td>20:20</td></tr>
  </table>
  <div class="sb">
    <svg width="15" height="420" style="position:absolute;left:0;top:0">
      <path d="M4 11.2 L7.6 5.4 L11.2 11.2 Z" fill="#8a8a8a" stroke="#8a8a8a" stroke-width="1.1" stroke-linejoin="round"/>
      <rect x="356" y="0" width="0" height="0"/>
      <rect x="3" y="18" width="9" height="342" rx="4.5" fill="#8f8f8f"/>
      <path d="M3.9 409.6 L11.3 409.6 L7.6 415.3 Z" fill="#8a8a8a" stroke="#8a8a8a" stroke-width="1.1" stroke-linejoin="round"/>
    </svg>
  </div>
</div>
<div class="card" id="c3">
  <div class="title" style="font-size:16.2px">Aracın Teknik Özellikleri</div>
  <svg style="position:absolute;left:0;top:0" width="368" height="420" viewBox="829 36 368 420">
    <!-- wheelchair -->
    <g fill="#d32f2f">
      <circle cx="895" cy="254.7" r="1.7"/>
      <path d="M887.6 257.2 L894.2 257.2 Q895.2 257.4 894.8 258.6 L893.9 262.1 L896.9 262.1 L896.9 268.2 L895.2 268.2 L895.2 263.8 L891 263.8 L890.6 263.2 L891.6 258.9 L888.8 258.9 L887.6 260 Z"/>
    </g>
    <path d="M888.2 261.3 A4 4 0 1 0 892.5 266.5" fill="none" stroke="#d32f2f" stroke-width="1.7"/>
    <!-- snowflake AcUnit -->
    <svg x="950.8" y="250.8" width="20" height="20" viewBox="0 0 24 24"><path fill="#d32f2f" d="M22 11h-4.17l3.24-3.24-1.41-1.42L15 11h-2V9l4.66-4.66-1.42-1.41L13 6.17V2h-2v4.17L7.76 2.93 6.34 4.34 11 9v2H9L4.34 6.34 2.93 7.76 6.17 11H2v2h4.17l-3.24 3.24 1.41 1.42L9 13h2v2l-4.66 4.66 1.42 1.41L11 17.83V22h2v-4.17l3.24 3.24 1.42-1.41L13 15v-2h2l4.66 4.66 1.41-1.42L17.83 13H22z"/></svg>
    <!-- bike -->
    <svg x="1022.8" y="250.5" width="20" height="20" viewBox="0 0 24 24"><path fill="#d32f2f" d="M15.5 5.5c1.1 0 2-.9 2-2s-.9-2-2-2-2 .9-2 2 .9 2 2 2zM5 12c-2.8 0-5 2.2-5 5s2.2 5 5 5 5-2.2 5-5-2.2-5-5-5zm0 8.5c-1.9 0-3.5-1.6-3.5-3.5s1.6-3.5 3.5-3.5 3.5 1.6 3.5 3.5-1.6 3.5-3.5 3.5zm5.8-10l2.4-2.4.8.8c1.3 1.3 3 2.1 5.1 2.1V9c-1.5 0-2.7-.6-3.6-1.5l-1.9-1.9c-.5-.4-1-.6-1.6-.6s-1.1.2-1.4.6L7.8 8.4c-.4.4-.6.9-.6 1.4 0 .6.2 1.1.6 1.4L11 14v5h2v-6.2l-2.2-2.3zM19 12c-2.8 0-5 2.2-5 5s2.2 5 5 5 5-2.2 5-5-2.2-5-5-5zm0 8.5c-1.9 0-3.5-1.6-3.5-3.5s1.6-3.5 3.5-3.5 3.5 1.6 3.5 3.5-1.6 3.5-3.5 3.5z"/></svg>
    <!-- battery -->
    <g fill="#2e7d32">
      <rect x="1110.2" y="252.2" width="3.7" height="2.5"/>
      <path d="M1108.2 254.3 H1115.9 V268.9 H1108.2 Z M1109.7 256 V259.7 H1114.4 V256 Z" fill-rule="evenodd"/>
    </g>
    <!-- wifi/cell -->
    <g fill="#2e7d32">
      <path d="M1158.8 268.9 L1171.1 256.2 L1171.1 268.9 Z M1168 260.8 V267.6 H1169.7 V260.8 Z" fill-rule="evenodd"/>
      <path d="M1156.9 256.6 Q1162 251.8 1167.2 256.6 L1166.2 257.5 Q1162 253.6 1157.9 257.5 Z"/>
      <path d="M1159.3 258.6 Q1162 256.3 1165 258.6 L1164 259.5 Q1162 258 1160.2 259.5 Z"/>
      <circle cx="1162" cy="260.5" r="0.9"/>
    </g>
    <g font-family="Liberation Sans, sans-serif" font-size="11.5" fill="#333">
      <text x="851.7" y="283.8" textLength="77.6" lengthAdjust="spacingAndGlyphs">Engelli Desteği</text>
      <text x="946.6" y="283.8" textLength="28.4" lengthAdjust="spacingAndGlyphs">Klima</text>
      <text x="992.6" y="283.8" textLength="79.3" lengthAdjust="spacingAndGlyphs">Bisiklet Taşıma</text>
      <text x="1089.4" y="283.8" textLength="45.4" lengthAdjust="spacingAndGlyphs">USB Şarj</text>
      <text x="1152.3" y="283.8" textLength="21.5" lengthAdjust="spacingAndGlyphs">WiFi</text>
    </g>
  </svg>
</div>
<div class="card" id="c4">
  <div class="title" style="transform:scaleX(0.925);transform-origin:0 0">OPERATOR BİLGİSİ</div>
  <div style="position:absolute;left:0;top:24px;font-size:16px;font-weight:bold;line-height:24px;color:#1a1a1a;transform:scaleX(0.95);transform-origin:0 0">İETT</div>
</div>
<div id="bar">T1082 - 34LD0389</div>
</body></html>
